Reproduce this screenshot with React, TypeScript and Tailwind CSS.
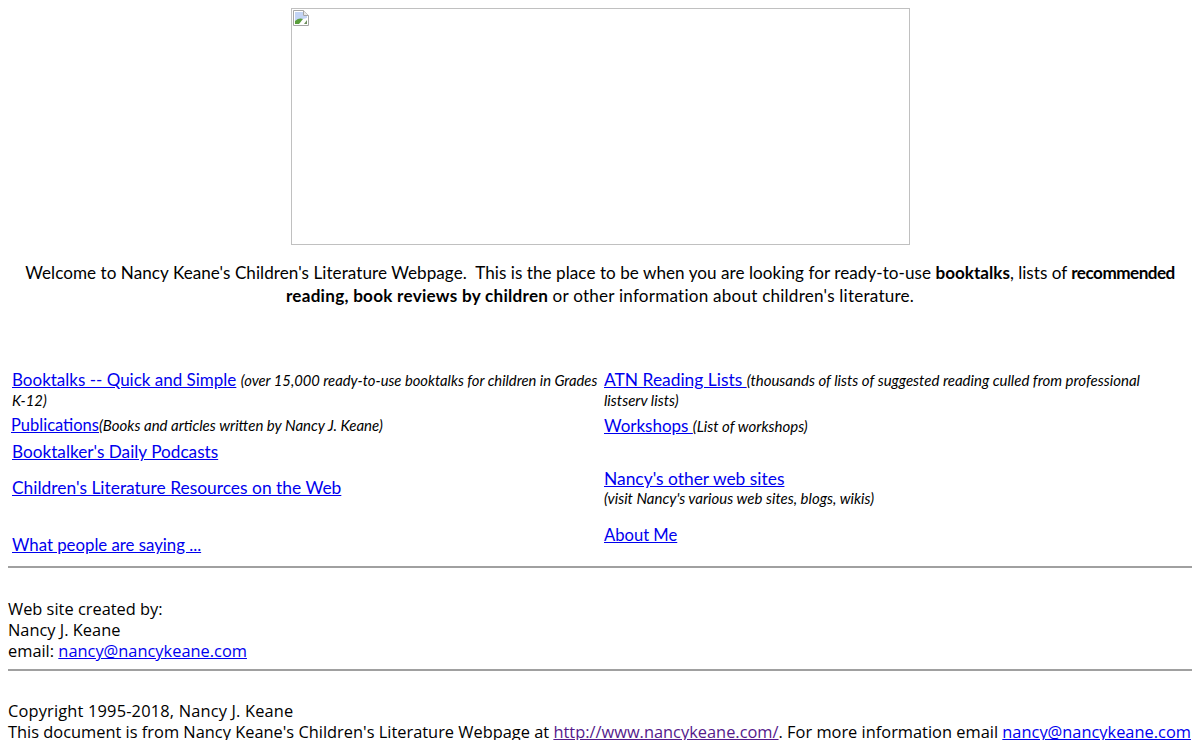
import React from 'react';

const comic = "font-['Lato',sans-serif]";

const BrokenImage = () => (
  <svg width="16" height="16" viewBox="0 0 16 16" className="block">
    <path d="M0.5 0.5H10.5L15.5 5.5V15.5H0.5Z" fill="#fff" stroke="#a6a6a6" />
    <path d="M10.5 0.5V5.5H15.5" fill="#e8e8e8" stroke="#a6a6a6" />
    <path d="M2 2H10V6H14V8L2 11Z" fill="#c3d4f5" />
    <path d="M2 14V11C5 8 8 8 10 9L6 14Z" fill="#5a9e3c" />
    <path d="M11 14L14 10V14Z" fill="#6f8f5f" />
  </svg>
);

const Link = ({ children, className = '' }: { children: React.ReactNode; className?: string }) => (
  <a href="#" className={`text-[#0000ee] underline ${className}`}>{children}</a>
);

const Note = ({ children, className = 'text-[15px]' }: { children: React.ReactNode; className?: string }) => (
  <em className={`italic text-black ${className}`}>{children}</em>
);

export default function App() {
  return (
    <div className="h-[740px] overflow-hidden bg-white px-2 pt-2 text-black font-['Open_Sans',sans-serif]">
      <div className="flex justify-center">
        <div className="h-[237px] w-[619px] border border-[#c0c0c0] pl-px pt-px">
          <BrokenImage />
        </div>
      </div>

      <p className={`mt-4 px-3 text-center text-[17.1px] leading-[23px] ${comic}`}>
        <span className="tracking-[0.05px]">
          Welcome to Nancy Keane's Children's Literature Webpage.&nbsp; This is the place to be when you are looking for ready-to-use{' '}
        </span>
        <b>booktalks</b>, lists of <b className="tracking-[-0.5px]">recommended</b>{' '}
        <b className="tracking-[0.27px]">reading, book reviews by children</b>{' '}
        <span className="tracking-[0.22px]">or other information about children's literature.</span>
      </p>

      <div className={`mt-[63px] grid h-[189px] grid-cols-[596px_1fr] text-[17.4px] ${comic}`}>
        <div className="flex flex-col pl-1">
          <div className="leading-[19px]">
            <Link className="text-[17px]">Booktalks -- Quick and Simple</Link>{' '}
            <Note className="text-[14.75px]">(over 15,000 ready-to-use booktalks for children in Grades K&#8209;12)</Note>
          </div>
          <div className="-ml-px mt-[5px] leading-5">
            <Link className="text-[16.5px]">Publications</Link><Note>(Books and articles written by Nancy J. Keane)</Note>
          </div>
          <div className="mt-[7px] leading-5">
            <Link className="text-[17.2px]">Booktalker's Daily Podcasts</Link>
          </div>
          <div className="mt-4 leading-5">
            <Link>Children's Literature Resources on the Web</Link>
          </div>
          <div className="mt-[37px] leading-5">
            <Link className="text-[16.8px]">What people are saying ...</Link>
          </div>
        </div>
        <div className="flex flex-col pr-5">
          <div className="leading-[19px]">
            <Link>ATN Reading Lists </Link><Note>(thousands of lists of suggested reading culled from professional listserv lists)</Note>
          </div>
          <div className="mt-1.5 leading-5">
            <Link className="text-[17px]">Workshops </Link><Note>(List of workshops)</Note>
          </div>
          <div className="mt-[33px] leading-[19px]">
            <Link>Nancy's other web sites</Link>
            <br />
            <Note>(visit Nancy's various web sites, blogs, wikis)</Note>
          </div>
          <div className="mt-[17px] leading-5">
            <Link className="text-[16.6px]">About Me</Link>
          </div>
        </div>
      </div>

      <hr className="mt-[7px] h-0.5 border-0 bg-[#a0a0a0]" />

      <div className="mt-[30px] text-[16.4px] leading-[21px]">
        Web site created by:
        <br />
        Nancy J. Keane
        <br />
        email: <Link>nancy@nancykeane.com</Link>
      </div>

      <hr className="mt-2 h-0.5 border-0 bg-[#a0a0a0]" />

      <div className="mt-[29px] whitespace-nowrap text-[16.4px] leading-[21px]">
        <span className="tracking-[0.17px]">Copyright 1995-2018, Nancy J. Keane</span>
        <br />
        This document is from Nancy Keane's Children's Literature Webpage at{' '}
        <a href="#" className="text-[#551a8b] underline">http://www.nancykeane.com/</a>. For more information email{' '}
        <Link>nancy@nancykeane.com</Link>
      </div>
    </div>
  );
}
